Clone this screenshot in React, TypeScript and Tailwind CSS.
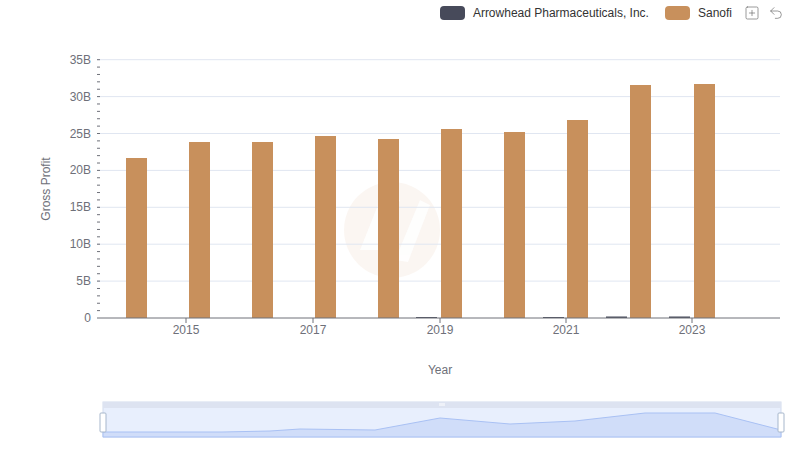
import { SquarePlus, Undo2 } from "lucide-react";

const sanofi = [
  { x: 126, top: 158 },
  { x: 189, top: 142 },
  { x: 252, top: 142 },
  { x: 315, top: 136 },
  { x: 378, top: 139 },
  { x: 441, top: 129 },
  { x: 504, top: 132 },
  { x: 567, top: 120 },
  { x: 630, top: 85 },
  { x: 694, top: 84 },
];

const arrowhead = [
  { x: 416, top: 317 },
  { x: 543, top: 317 },
  { x: 606, top: 316.5 },
  { x: 669, top: 316.5 },
];

const yTicks = ["0", "5B", "10B", "15B", "20B", "25B", "30B", "35B"];
const years = [
  { label: "2015", x: 186 },
  { label: "2017", x: 313 },
  { label: "2019", x: 440 },
  { label: "2021", x: 566 },
  { label: "2023", x: 692 },
];

export default function App() {
  const zero = 318;
  const step = 36.9;
  return (
    <div
      className="relative h-[461px] w-[800px] overflow-hidden bg-white"
      style={{ fontFamily: "'Liberation Sans', Arial, sans-serif" }}
    >
      {/* Legend */}
      <div className="flex h-[26px] items-center justify-end gap-2 pr-[16px] text-[12px] text-[#333]">
        <span className="h-[14px] w-[25px] rounded-[4px] bg-[#474a5a]" />
        <span className="mr-2">Arrowhead Pharmaceuticals, Inc.</span>
        <span className="h-[14px] w-[25px] rounded-[4px] bg-[#c8905c]" />
        <span>Sanofi</span>
        <SquarePlus size={16} strokeWidth={1} className="ml-1 text-[#666]" />
        <Undo2 size={16} strokeWidth={1} className="text-[#666]" />
      </div>

      <svg width="800" height="435" viewBox="0 26 800 435" className="absolute left-0 top-[26px]">
        {/* watermark */}
        <g opacity="0.08" fill="#c8905c">
          <circle cx="392" cy="230" r="48" />
        </g>
        <g opacity="0.9" fill="white">
          <path d="M360 250 L380 200 L400 200 L380 250 Z" />
          <path d="M395 260 L420 200 L430 205 L408 262 Z" />
        </g>

        {/* grid */}
        {yTicks.map((t, i) => {
          const y = zero - i * step;
          return (
            <g key={t}>
              {i > 0 && <line x1="97" x2="780" y1={y} y2={y} stroke="#e0e6f1" strokeWidth="1" />}
              <text x="91" y={y + 4} textAnchor="end" fontSize="12" fill="#6e7079">
                {t}
              </text>
            </g>
          );
        })}
        {/* minor ticks */}
        {Array.from({ length: 35 }).map((_, i) => {
          const y = zero - (i + 1) * (step / 5);
          return <line key={i} x1="97" x2="100" y1={y} y2={y} stroke="#6e7079" strokeWidth="1" />;
        })}

        {/* bars */}
        {sanofi.map((b) => (
          <rect key={b.x} x={b.x} y={b.top} width="21" height={zero - b.top} fill="#c8905c" />
        ))}
        {arrowhead.map((b) => (
          <rect key={b.x} x={b.x} y={b.top} width="21" height={zero - b.top} fill="#474a5a" />
        ))}

        {/* x axis */}
        <line x1="97" x2="780" y1={zero} y2={zero} stroke="#6e7079" strokeWidth="1" />
        {years.map((y) => (
          <g key={y.label}>
            <line x1={y.x} x2={y.x} y1={zero} y2={zero + 5} stroke="#6e7079" />
            <text x={y.x} y={zero + 16} textAnchor="middle" fontSize="12" fill="#6e7079">
              {y.label}
            </text>
          </g>
        ))}

        <text x="440" y="374" textAnchor="middle" fontSize="12" fill="#6e7079">
          Year
        </text>
        <text
          x="50"
          y="189"
          textAnchor="middle"
          fontSize="12"
          fill="#6e7079"
          transform="rotate(-90 50 189)"
        >
          Gross Profit
        </text>

        {/* data zoom */}
        <rect x="103" y="402" width="678" height="35" fill="#e8effd" stroke="#d2dbee" />
        <rect x="103" y="402" width="678" height="6" fill="#dde3f1" />
        <path
          d="M103 432 L222 432 L270 431 L300 429 L375 430 L440 418 L510 424 L575 421 L645 413 L715 413 L781 430 L781 437 L103 437 Z"
          fill="#d0ddf9"
          stroke="#a9c1f4"
          strokeWidth="1"
        />
        <line x1="440" x2="440" y1="403" y2="406" stroke="#fff" />
        <line x1="442" x2="442" y1="403" y2="406" stroke="#fff" />
        <line x1="444" x2="444" y1="403" y2="406" stroke="#fff" />
        <rect x="100" y="413" width="6" height="19" rx="1" fill="#fff" stroke="#a7b7cc" />
        <rect x="778" y="413" width="6" height="19" rx="1" fill="#fff" stroke="#a7b7cc" />
      </svg>
    </div>
  );
}
